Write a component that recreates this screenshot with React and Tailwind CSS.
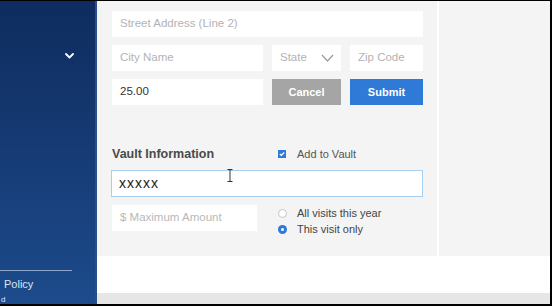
// Payment form with vault section
const font = { fontFamily: '"Liberation Sans", Arial, sans-serif' }

const Field = ({ className = '', children }) => (
  <div className={`bg-white flex items-center px-2 text-[11.5px] ${className}`}>{children}</div>
)

export default function App() {
  return (
    <div className="w-[552px] h-[306px] bg-black pt-px pr-[2px] pb-[2px] overflow-hidden" style={font}>
      <div className="flex h-full">
        {/* 侧边栏 */}
        <div className="relative w-[97px] h-full bg-gradient-to-b from-[#0e2c5e] via-[#163b75] to-[#1d4b8c] border-r-2 border-[#2a4f86]">
          <svg className="absolute left-[65px] top-[52px] w-[9px] h-[6px]" viewBox="0 0 9 6" fill="none" stroke="white" strokeWidth="1.8" strokeLinecap="round" strokeLinejoin="round">
            <path d="M1 1l3.5 3.5L8 1" />
          </svg>
          <div className="absolute left-0 top-[269px] w-[72px] h-px bg-[#8ea8cc]"></div>
          <div className="absolute left-[4px] top-[275px] text-[11px] text-[#dde5f0]">Policy</div>
          <div className="absolute left-[1px] top-[294px] text-[8px] leading-[9px] text-[#dde5f0]">d</div>
        </div>

        {/* 右侧内容 */}
        <div className="flex-1 flex flex-col">
          <div className="h-[255px] flex bg-[#f4f4f4]">
            <div className="relative w-[340px] pl-[15px] pt-[10px]">
              <div className="flex flex-col gap-[8px] w-[311px]">
                <Field className="h-[26px] text-[#b3b3b3]">Street Address (Line 2)</Field>
                <div className="flex gap-[9px] h-[26px]">
                  <Field className="w-[151px] text-[#b3b3b3]">City Name</Field>
                  <Field className="w-[69px] text-[#b3b3b3] justify-between pr-[7px]">
                    <span>State</span>
                    <svg className="w-[13px] h-[8px]" viewBox="0 0 13 8" fill="none" stroke="#9a9a9a" strokeWidth="1.2">
                      <path d="M1 1l5.5 6L12 1" />
                    </svg>
                  </Field>
                  <Field className="w-[73px] text-[#b3b3b3]">Zip Code</Field>
                </div>
                <div className="flex gap-[9px] h-[26px]">
                  <Field className="w-[151px] text-[#333]">25.00</Field>
                  <button className="w-[69px] bg-[#a5a5a5] text-white text-[11px] font-bold">Cancel</button>
                  <button className="w-[73px] bg-[#2e7ad6] text-white text-[11px] font-bold">Submit</button>
                </div>
              </div>

              {/* Vault Information */}
              <div className="flex items-center mt-[40px] w-[311px]">
                <div className="w-[166px] text-[12.5px] font-bold text-[#4a4a4a]">Vault Information</div>
                <div className="w-[8px] h-[8px] bg-[#2e7ad6] flex items-center justify-center">
                  <svg className="w-[6px] h-[6px]" viewBox="0 0 6 6" fill="none" stroke="white" strokeWidth="1.2">
                    <path d="M0.8 3l1.5 1.5L5.2 1.5" />
                  </svg>
                </div>
                <div className="ml-[11px] text-[11px] text-[#555]">Add to Vault</div>
              </div>
              <div className="mt-[6px] h-[27px] w-[312px] -ml-px bg-white border-[1.5px] border-[#a6cff0] flex items-center pl-[7px] text-[14px] tracking-[1px] text-[#222]">
                xxxxx
              </div>
              <div className="flex mt-[8px] w-[311px]">
                <Field className="w-[145px] h-[26px] text-[#b8b8b8]">$ Maximum Amount</Field>
                <div className="ml-[21px] pt-[2px] flex flex-col gap-[3px] text-[11px] leading-[13px] text-[#444]">
                  <div className="flex items-center gap-[10px]">
                    <span className="w-[9px] h-[9px] rounded-full border border-[#c4c4c4] bg-white"></span>
                    <span>All visits this year</span>
                  </div>
                  <div className="flex items-center gap-[10px]">
                    <span className="w-[9px] h-[9px] rounded-full bg-[#2e7ad6] flex items-center justify-center">
                      <span className="w-[3px] h-[3px] rounded-full bg-white"></span>
                    </span>
                    <span>This visit only</span>
                  </div>
                </div>
              </div>

              {/* 文本光标 */}
              <svg className="absolute left-[130px] top-[168px] w-[6px] h-[13px]" viewBox="0 0 6 13" fill="none" stroke="#333" strokeWidth="1">
                <path d="M0.5 0.5h5M3 0.5v12M0.5 12.5h5" />
              </svg>
            </div>
            <div className="w-[2px] bg-white"></div>
            <div className="flex-1"></div>
          </div>
          <div className="flex-1 bg-white"></div>
          <div className="h-[11px] bg-[#e6e6e6]"></div>
        </div>
      </div>
    </div>
  )
}
